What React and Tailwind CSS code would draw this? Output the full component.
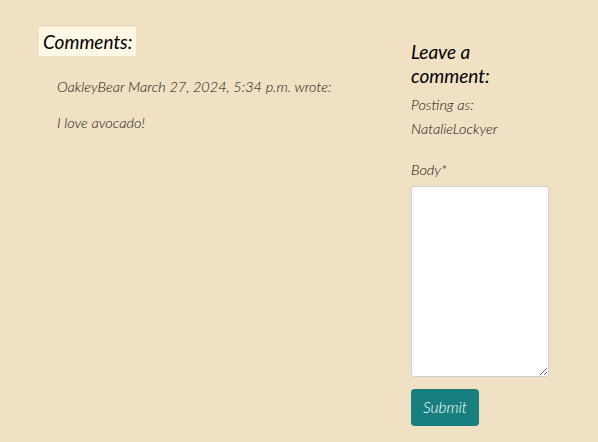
export default function App() {
  return (
    <div
      className="w-[598px] h-[442px] bg-[#f0e1c4] overflow-hidden text-[#111] italic"
      style={{ fontFamily: 'Lato, "Noto Sans", sans-serif' }}
    >
      <div className="flex pt-[27px]">
        <div className="w-[372px] pl-[39px]">
          <h3 className="inline-block bg-[#fdf8e6] px-[4px] text-[19px] leading-[29px] font-normal text-black">
            Comments:
          </h3>
          <div className="pl-[18px] pt-[19px] text-[14.5px] leading-[24px] font-light">
            <p>OakleyBear March 27, 2024, 5:34 p.m. wrote:</p>
            <p className="mt-[12px]">I love avocado!</p>
          </div>
        </div>
        <div className="w-[140px] ml-[39px] pt-[13px]">
          <h3 className="text-[19px] leading-[24px] font-normal text-black">Leave a comment:</h3>
          <p className="mt-[5px] text-[14.5px] leading-[24px] font-light">Posting as:</p>
          <p className="text-[14.5px] leading-[24px] font-light">NatalieLockyer</p>
          <p className="mt-[17px] text-[14.5px] leading-[24px] font-light">Body*</p>
          <textarea className="mt-[4px] block w-[138px] h-[191px] bg-white border border-[#ccd2da] rounded-[3px]"></textarea>
          <button className="mt-[12px] w-[68px] h-[37px] rounded-[4px] bg-[#17807f] text-white text-[15.5px] font-light italic">
            Submit
          </button>
        </div>
      </div>
    </div>
  );
}
